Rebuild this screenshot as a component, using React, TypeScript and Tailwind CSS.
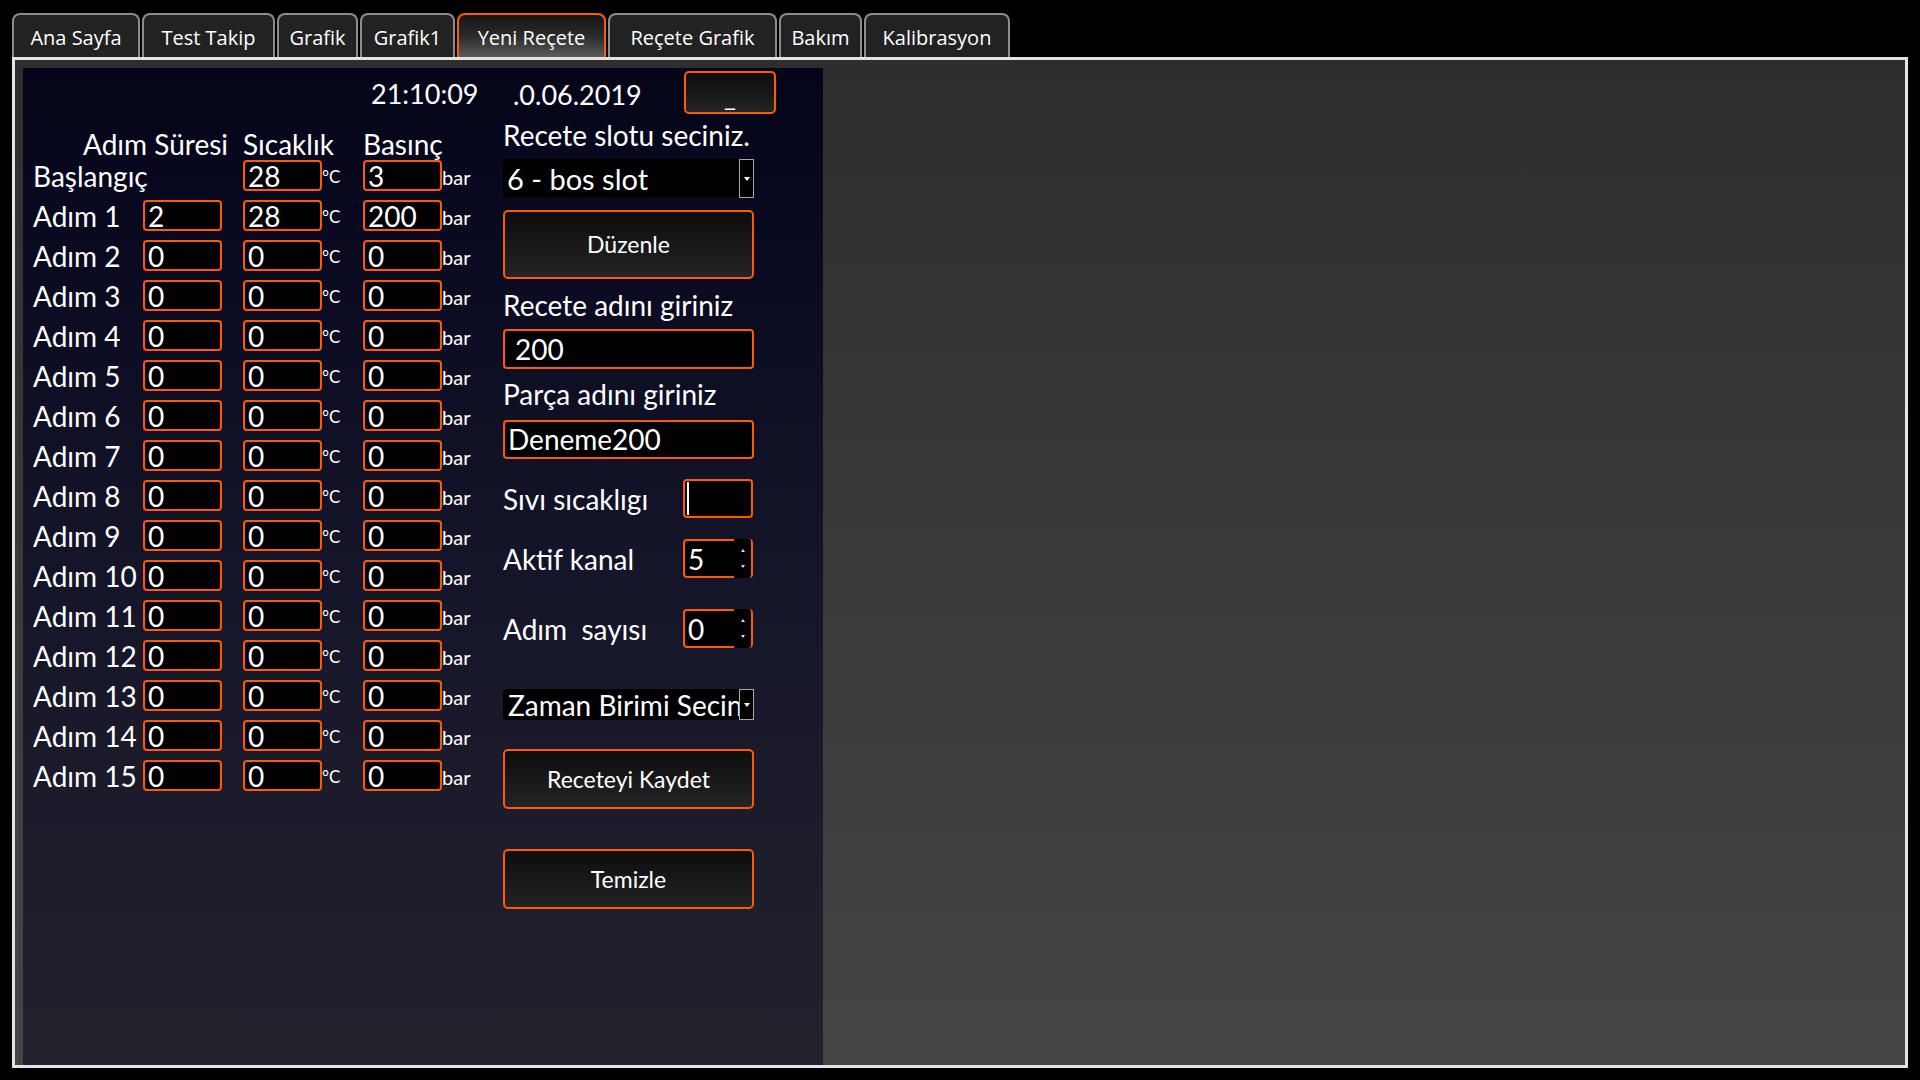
const tabs = [
  { name: "Ana Sayfa", w: "w-[128px]" },
  { name: "Test Takip", w: "w-[133px]" },
  { name: "Grafik", w: "w-[81px]" },
  { name: "Grafik1", w: "w-[95px]" },
  { name: "Yeni Reçete", w: "w-[149px]", active: true },
  { name: "Reçete Grafik", w: "w-[169px]" },
  { name: "Bakım", w: "w-[83px]" },
  { name: "Kalibrasyon", w: "w-[146px]" },
];

type Step = { label: string; t: string | null; s: string; p: string };

const steps: Step[] = [
  { label: "Başlangıç", t: null, s: "28", p: "3" },
  { label: "Adım 1", t: "2", s: "28", p: "200" },
  ...Array.from({ length: 14 }, (_, i) => ({ label: `Adım ${i + 2}`, t: "0", s: "0", p: "0" })),
];

function Cell({ value }: { value: string }) {
  return (
    <div className="w-[79px] h-[31px] shrink-0 rounded-[4px] border-2 border-[#ff5a00] bg-black pl-[3px] pt-[1px] text-[28px] leading-[26px] text-white">
      {value}
    </div>
  );
}

function OrangeButton({ label, h }: { label: string; h: string }) {
  return (
    <div className={`w-[251px] ${h} rounded-[5px] border-2 border-[#ff5a00] bg-linear-to-b from-[#0d0d0d] to-[#242424] flex items-center justify-center text-[23px] text-white`}>
      {label}
    </div>
  );
}

function DropArrow() {
  return (
    <div className="w-[15px] self-stretch border border-[#a8a8a8] bg-black flex items-center justify-center">
      <svg width="6" height="4" viewBox="0 0 6 4">
        <path d="M0 0h6L3 4z" fill="#fff" />
      </svg>
    </div>
  );
}

function Spinner({ value }: { value: string }) {
  return (
    <div className="w-[70px] h-[39px] rounded-[4px] border-2 border-[#ff5a00] bg-black flex items-stretch">
      <div className="flex-1 pl-[3px] pt-[2px] text-[28px] leading-[33px] text-white">{value}</div>
      <div className="-my-[2px] w-[17px] bg-black rounded-r-[3px] flex flex-col items-center justify-between py-[10px]">
        <svg width="4" height="3" viewBox="0 0 4 3">
          <path d="M0 3h4L2 0z" fill="#ddd" />
        </svg>
        <svg width="4" height="3" viewBox="0 0 4 3">
          <path d="M0 0h4L2 3z" fill="#ddd" />
        </svg>
      </div>
    </div>
  );
}

export default function App() {
  return (
    <div className="w-[1920px] h-[1080px] bg-black overflow-hidden text-white font-['Lato',sans-serif]">
      {/* Tabs */}
      <div className="flex gap-[2px] pl-[12px] pt-[13px] font-['Open_Sans',sans-serif]">
        {tabs.map((t) => (
          <div
            key={t.name}
            className={`${t.w} h-[44px] rounded-t-[8px] border-2 border-b-0 flex items-center justify-center pt-[3px] text-[20px] ${
              t.active
                ? "border-[#ff5a00] bg-linear-to-b from-[#161616] via-[#2a2a2a] to-[#5c5c5c]"
                : "border-[#8c8c8c] bg-[#222222]"
            }`}
          >
            {t.name}
          </div>
        ))}
      </div>

      {/* Frame */}
      <div className="ml-[12px] w-[1896px] h-[1011px] border-[3px] border-[#e4e4e4] bg-linear-to-b from-[#2e2e2e] to-[#454545] pl-[8px] pt-[8px]">
        <div className="w-[800px] h-full bg-linear-to-b from-[#05051a] via-[#15152a] to-[#22222c] flex">
          {/* Left column: steps */}
          <div className="w-[480px] shrink-0 pl-[10px]">
            <div className="h-[47px] flex items-center pt-[6px] pl-[338px] text-[27px]">21:10:09</div>
            <div className="mt-[15px] h-[28px] mb-[2px] flex items-center pl-[50px] text-[28px] leading-[28px] whitespace-nowrap">
              <div className="w-[160px]">Adım Süresi</div>
              <div className="w-[120px]">Sıcaklık</div>
              <div>Basınç</div>
            </div>
            <div className="flex flex-col gap-[9px]">
              {steps.map((r) => (
                <div key={r.label} className="flex h-[31px] items-center">
                  <div className="w-[110px] shrink-0 whitespace-nowrap text-[28px] leading-none">{r.label}</div>
                  {r.t === null ? <div className="w-[79px] shrink-0" /> : <Cell value={r.t} />}
                  <div className="w-[21px] shrink-0" />
                  <Cell value={r.s} />
                  <div className="w-[41px] shrink-0 pt-[2px] text-[17px]">°C</div>
                  <Cell value={r.p} />
                  <div className="pt-[3px] text-[20px]">bar</div>
                </div>
              ))}
            </div>
          </div>

          {/* Right column: recipe form */}
          <div className="w-[251px] shrink-0 flex flex-col">
            <div className="h-[47px] w-[273px] flex items-center">
              <div className="w-[181px] shrink-0 pl-[10px] pt-[8px] text-[27px]">.0.06.2019</div>
              <div className="w-[92px] h-[43px] mt-[2px] rounded-[5px] border-2 border-[#ff5a00] bg-linear-to-b from-[#0d0d0d] to-[#242424] flex items-center justify-center pt-[8px] text-[26px]">
                _
              </div>
            </div>
            <div className="mt-[6px] h-[28px] flex items-center text-[28px] whitespace-nowrap">Recete slotu seciniz.</div>
            <div className="mt-[10px] h-[39px] rounded-l-[4px] bg-black flex items-stretch">
              <div className="flex-1 pl-[4px] text-[29px] leading-[39px] whitespace-nowrap">6 - bos slot</div>
              <DropArrow />
            </div>
            <div className="mt-[12px]">
              <OrangeButton label="Düzenle" h="h-[69px]" />
            </div>
            <div className="mt-[12px] h-[28px] flex items-center text-[28px] whitespace-nowrap">Recete adını giriniz</div>
            <div className="mt-[10px] h-[40px] rounded-[4px] border-2 border-[#ff5a00] bg-black pl-[10px] text-[28px] leading-[36px]">200</div>
            <div className="mt-[11px] h-[28px] flex items-center text-[28px] whitespace-nowrap">Parça adını giriniz</div>
            <div className="mt-[12px] h-[39px] rounded-[4px] border-2 border-[#ff5a00] bg-black pl-[3px] text-[28px] leading-[35px]">Deneme200</div>

            <div className="mt-[20px] h-[39px] flex items-center">
              <div className="w-[180px] text-[28px] whitespace-nowrap">Sıvı sıcaklıgı</div>
              <div className="w-[70px] h-[39px] rounded-[4px] border-2 border-[#ff5a00] bg-black flex items-center pl-[2px]">
                <div className="w-[2px] h-[33px] bg-white" />
              </div>
            </div>
            <div className="mt-[21px] h-[39px] flex items-center">
              <div className="w-[180px] text-[28px] whitespace-nowrap">Aktif kanal</div>
              <Spinner value="5" />
            </div>
            <div className="mt-[31px] h-[39px] flex items-center">
              <div className="w-[180px] text-[28px] whitespace-pre">Adım  sayısı</div>
              <Spinner value="0" />
            </div>

            <div className="mt-[41px] h-[31px] rounded-l-[4px] bg-black flex items-stretch">
              <div className="w-[236px] pl-[5px] text-[28px] leading-[33px] whitespace-nowrap overflow-hidden">Zaman Birimi Secin</div>
              <DropArrow />
            </div>
            <div className="mt-[29px]">
              <OrangeButton label="Receteyi Kaydet" h="h-[60px]" />
            </div>
            <div className="mt-[40px]">
              <OrangeButton label="Temizle" h="h-[60px]" />
            </div>
          </div>
        </div>
      </div>
    </div>
  );
}
